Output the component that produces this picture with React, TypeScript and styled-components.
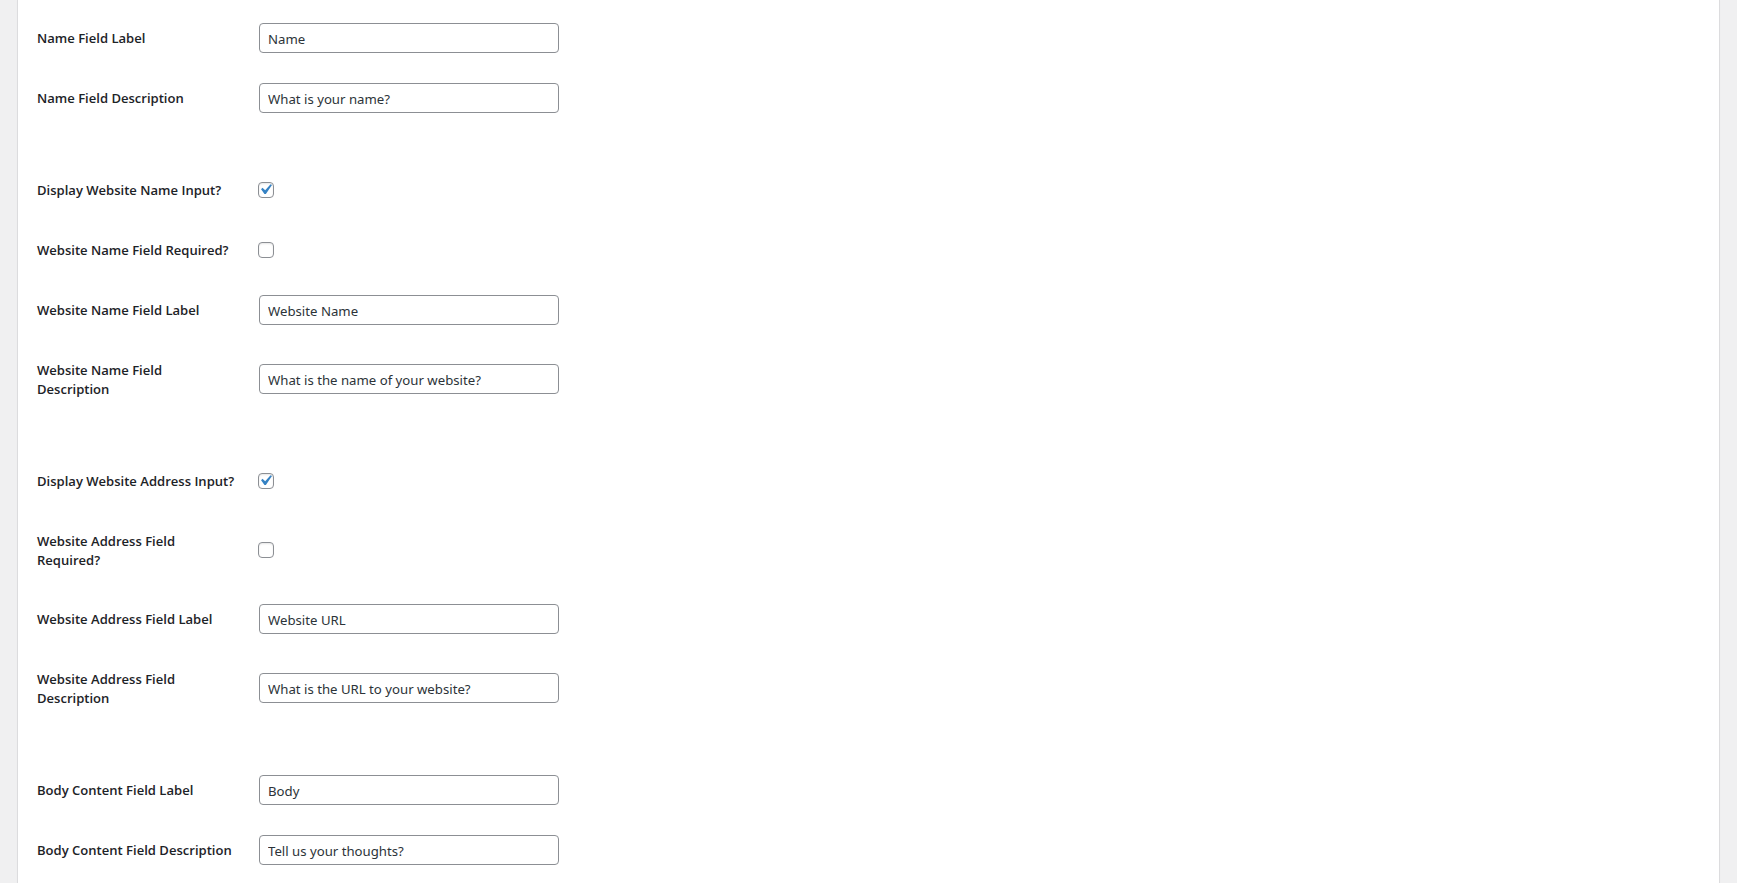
import React from "react";
import styled, { createGlobalStyle } from "styled-components";

const GlobalStyle = createGlobalStyle`
  html, body {
    margin: 0;
    padding: 0;
    background: #f0f0f1;
  }
  body {
    font-family: "Noto Sans", "Open Sans", sans-serif;
    color: #1d2327;
  }
`;

const Page = styled.div`
  min-height: 883px;
  padding: 0 17px 0 17px;
  box-sizing: border-box;
`;

const Panel = styled.div`
  background: #ffffff;
  border-left: 1px solid #dcdcde;
  border-right: 1px solid #dcdcde;
  box-shadow: 0 1px 1px rgba(0, 0, 0, 0.04);
  padding: 8px 20px 20px 19px;
  min-height: 883px;
  box-sizing: border-box;
`;

const Row = styled.div`
  display: flex;
  align-items: center;
`;

const Label = styled.label`
  flex: 0 0 200px;
  margin-right: 22px;
  padding: 21px 0 19px;
  font-family: "Open Sans", "Noto Sans", sans-serif;
  font-size: 13.05px;
  font-weight: 600;
  line-height: 19px;
  min-height: 20px;
  color: #1d2327;
`;

const Control = styled.div`
  padding: 15px 0;
  display: flex;
  align-items: center;
`;

const TextInput = styled.input`
  box-sizing: border-box;
  width: 300px;
  height: 30px;
  padding: 1px 8px 0;
  border: 1px solid #8c8f94;
  border-radius: 4px;
  background: #fff;
  color: #2c3338;
  font-family: "Noto Sans", "Open Sans", sans-serif;
  font-size: 13.2px;
  line-height: 2;
  outline: none;
`;

const Box = styled.span<{ $checked: boolean }>`
  position: relative;
  display: inline-block;
  box-sizing: border-box;
  width: 16px;
  height: 16px;
  border: 1px solid #8c8f94;
  border-radius: 4px;
  background: #fff;
  box-shadow: inset 0 1px 2px rgba(0, 0, 0, 0.1);
  margin-left: -1px;
`;

const Tick = styled.svg`
  position: absolute;
  left: -4px;
  top: -4px;
  width: 21px;
  height: 21px;
`;

const Spacer = styled.div<{ $h: number }>`
  height: ${(p) => p.$h}px;
`;

type Field =
  | { kind: "text"; label: string; value: string }
  | { kind: "check"; label: string; checked: boolean }
  | { kind: "gap"; h: number };

const fields: Field[] = [
  { kind: "text", label: "Name Field Label", value: "Name" },
  { kind: "text", label: "Name Field Description", value: "What is your name?" },
  { kind: "gap", h: 32 },
  { kind: "check", label: "Display Website Name Input?", checked: true },
  { kind: "check", label: "Website Name Field Required?", checked: false },
  { kind: "text", label: "Website Name Field Label", value: "Website Name" },
  { kind: "text", label: "Website Name Field Description", value: "What is the name of your website?" },
  { kind: "gap", h: 33 },
  { kind: "check", label: "Display Website Address Input?", checked: true },
  { kind: "check", label: "Website Address Field Required?", checked: false },
  { kind: "text", label: "Website Address Field Label", value: "Website URL" },
  { kind: "text", label: "Website Address Field Description", value: "What is the URL to your website?" },
  { kind: "gap", h: 33 },
  { kind: "text", label: "Body Content Field Label", value: "Body" },
  { kind: "text", label: "Body Content Field Description", value: "Tell us your thoughts?" },
];

const Checkbox: React.FC<{ checked: boolean }> = ({ checked }) => (
  <Box $checked={checked}>
    {checked && (
      <Tick viewBox="0 0 20 20">
        <path
          d="M14.83 4.89l1.34.94-5.81 8.38H9.02L5.78 9.67l1.34-1.25 2.57 2.4z"
          fill="#3582c4"
        />
      </Tick>
    )}
  </Box>
);

export default function App() {
  return (
    <>
      <GlobalStyle />
      <Page>
        <Panel>
          {fields.map((f, i) => {
            if (f.kind === "gap") return <Spacer key={i} $h={f.h} />;
            return (
              <Row key={i}>
                <Label>{f.label}</Label>
                <Control>
                  {f.kind === "text" ? (
                    <TextInput type="text" defaultValue={f.value} />
                  ) : (
                    <Checkbox checked={f.checked} />
                  )}
                </Control>
              </Row>
            );
          })}
        </Panel>
      </Page>
    </>
  );
}
